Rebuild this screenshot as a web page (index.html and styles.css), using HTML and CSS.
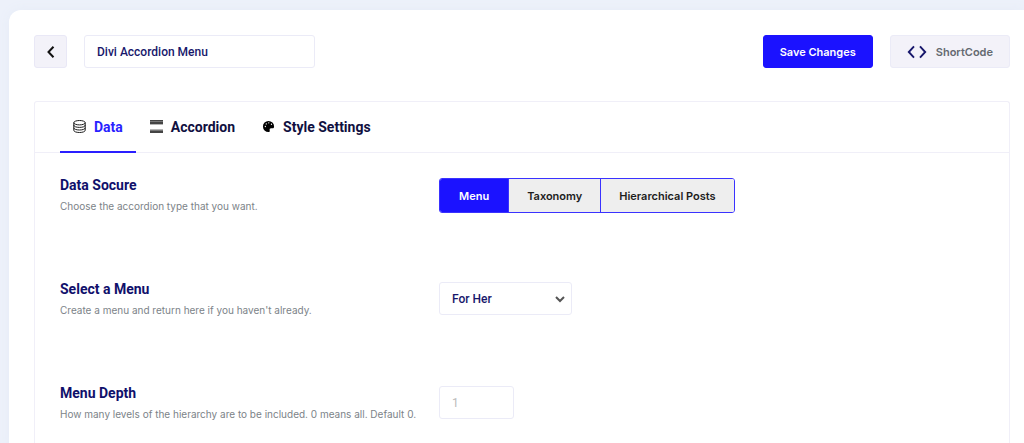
FILE: index.html
```html
<!DOCTYPE html>
<html lang="en">
<head>
<meta charset="utf-8">
<meta name="viewport" content="width=device-width, initial-scale=1">
<title>Divi Accordion Menu</title>
<link rel="stylesheet" href="styles.css">
</head>
<body>
<main class="card">
  <header class="toolbar">
    <button class="back" type="button" aria-label="Back">
      <svg width="8" height="12" viewBox="0 0 8 12"><path d="M6.500.8 1.500 6l5 5.200" fill="none" stroke="currentColor" stroke-width="2"/></svg>
    </button>
    <input class="field name" type="text" value="Divi Accordion Menu" aria-label="Menu name">
    <div class="actions">
      <button class="btn save" type="button">Save Changes</button>
      <button class="btn shortcode" type="button">
        <svg width="20" height="14" viewBox="0 0 20 14"><path d="M7 1.300 1.800 7 7 12.700M13 1.300 18.200 7 13 12.700" fill="none" stroke="#17176b" stroke-width="1.900"/></svg>
        ShortCode
      </button>
    </div>
  </header>

  <section class="panel">
    <nav class="tabs" role="tablist">
      <button class="tab active" type="button" role="tab" aria-selected="true">
        <svg width="13" height="13" viewBox="0 0 13 13" fill="none" stroke="#1d1d1d" stroke-width="1"><ellipse cx="6.500" cy="2.700" rx="5.700" ry="2.200"/><path d="M.8 2.700v7.600c0 1.300 2.500 2.200 5.700 2.200s5.700-.9 5.700-2.200V2.700M.8 5.200c0 1.300 2.500 2.200 5.700 2.200s5.700-.9 5.700-2.200M.8 7.800c0 1.300 2.500 2.200 5.700 2.200s5.700-.9 5.700-2.200"/></svg>
        Data
      </button>
      <button class="tab" type="button" role="tab" aria-selected="false">
        <svg width="13" height="13" viewBox="0 0 13 13"><path fill="#444" d="M0 0h13v1H0zM0 2h13v2H0zM0 11h13v2H0z"/><path fill="#777" d="M0 1h13v1H0zM0 10h13v1H0z"/><path fill="#b5b5b5" d="M0 4h13v1H0zM0 9h13v1H0z"/></svg>
        Accordion
      </button>
      <button class="tab" type="button" role="tab" aria-selected="false">
        <svg width="13" height="13" viewBox="0 0 14 14"><path d="M7 1a6 6 0 0 0 0 12c1 0 1.500-.7 1.300-1.700C8 9.800 8.400 9 9.800 9h1.600C12.600 9 13 8 13 7a6 6 0 0 0-6-6Z"/><g fill="#fff"><circle cx="3.600" cy="7" r=".7"/><circle cx="4.600" cy="4.200" r=".7"/><circle cx="7.300" cy="3" r=".7"/><circle cx="10.200" cy="4.600" r=".7"/></g></svg>
        Style Settings
      </button>
    </nav>

    <div class="settings">
      <div class="setting">
        <div class="info">
          <h2 id="source">Data Socure</h2>
          <p>Choose the accordion type that you want.</p>
        </div>
        <div class="segments" role="group" aria-labelledby="source">
          <button class="segment chosen" type="button" aria-pressed="true">Menu</button>
          <button class="segment" type="button" aria-pressed="false">Taxonomy</button>
          <button class="segment" type="button" aria-pressed="false">Hierarchical Posts</button>
        </div>
      </div>
      <div class="setting">
        <div class="info">
          <h2><label for="menu">Select a Menu</label></h2>
          <p>Create a menu and return here if you haven't already.</p>
        </div>
        <div class="select">
          <select class="field" id="menu"><option>For Her</option></select>
          <svg class="chevron" width="10" height="8" viewBox="0 0 10 8"><path d="M1 2l4 4 4-4" fill="none" stroke="#555" stroke-width="2"/></svg>
        </div>
      </div>
      <div class="setting">
        <div class="info">
          <h2><label for="depth">Menu Depth</label></h2>
          <p>How many levels of the hierarchy are to be included. 0 means all. Default 0.</p>
        </div>
        <input class="field depth" id="depth" type="text" placeholder="1">
      </div>
    </div>
  </section>
</main>
</body>
</html>
```
FILE: styles.css
```css
* { box-sizing: border-box; }

body {
  margin: 0;
  padding: 10px 0 0 9px;
  background: #edf1fa;
  font-family: Inter, "Liberation Sans", sans-serif;
  color: #10164f;
}

button, input, select { font: inherit; }
button { cursor: pointer; }

.card {
  min-height: calc(100vh - 10px);
  padding: 25px 14px 0 25px;
  background: #fff;
  border-radius: 12px 0 0 0;
  box-shadow: 0 0 12px #e6ecf7;
}

.toolbar {
  display: flex;
  align-items: center;
  margin-bottom: 33px;
}

.back {
  display: grid;
  place-items: center;
  width: 33px;
  height: 33px;
  margin-right: 17px;
  padding: 0;
  border: 1px solid #e9e8f6;
  border-radius: 3px;
  background: #f3f2f9;
  color: #111;
}

.field {
  height: 33px;
  padding: 0 12px;
  border: 1px solid #ebebf7;
  border-radius: 3px;
  background: #fff;
  color: #17176b;
  font-family: Roboto, "Liberation Sans", sans-serif;
  font-size: 12px;
  font-weight: 500;
}
.field::placeholder { color: #bbb; opacity: 1; font-weight: 400; }
.name { width: 231px; }

.actions {
  display: flex;
  gap: 17px;
  margin-left: auto;
}

.btn {
  display: flex;
  align-items: center;
  gap: 9px;
  height: 33px;
  padding: 0 16px;
  border: 1px solid #1b12ff;
  border-radius: 3px;
  font-size: 11px;
  font-weight: 600;
}
.save { background: #1b12ff; color: #fff; }
.shortcode {
  border-color: #ebebf7;
  background: #f3f2f9;
  color: #646970;
}

.panel {
  min-height: 342px;
  border: 1px solid #f0eff8;
  border-bottom: 0;
  border-radius: 3px 3px 0 0;
}

.tabs {
  display: flex;
  gap: 1px;
  padding: 0 25px;
  border-bottom: 1px solid #f0eff8;
}
.tab {
  display: flex;
  align-items: center;
  gap: 8px;
  height: 51px;
  margin-bottom: -1px;
  padding: 0 13px;
  border: 0;
  border-bottom: 2px solid transparent;
  background: none;
  color: #10103f;
  font-family: Roboto, "Liberation Sans", sans-serif;
  font-size: 14px;
  font-weight: 700;
}
.active { border-bottom-color: #2a1fff; color: #2a1fff; }

.settings {
  display: grid;
  gap: 68px;
  padding: 25px;
}
.setting {
  display: flex;
  align-items: flex-start;
}
.info { width: 379px; }
.info h2 {
  margin: 0 0 6px;
  color: #10106b;
  font-family: Roboto, "Liberation Sans", sans-serif;
  font-size: 14px;
  font-weight: 700;
  line-height: 14px;
}
.info p {
  margin: 0;
  color: #7c8388;
  font-size: 10px;
  line-height: 16px;
}

.segments {
  display: flex;
  overflow: hidden;
  border: 1px solid #3a32ff;
  border-radius: 3px;
}
.segment {
  height: 33px;
  padding: 0 18px;
  border: 0;
  background: #eee;
  color: #1d1d1d;
  font-size: 11px;
  font-weight: 600;
}
.segment:first-child { padding: 0 19px; }
.segment + .segment { border-left: 1px solid #3a32ff; }
.segment.chosen { background: #1b12ff; color: #fff; }

.select { position: relative; width: 133px; }
.select .field { width: 100%; appearance: none; }
.chevron {
  position: absolute;
  top: 13px;
  right: 7px;
  pointer-events: none;
}
.depth { width: 75px; }
```
